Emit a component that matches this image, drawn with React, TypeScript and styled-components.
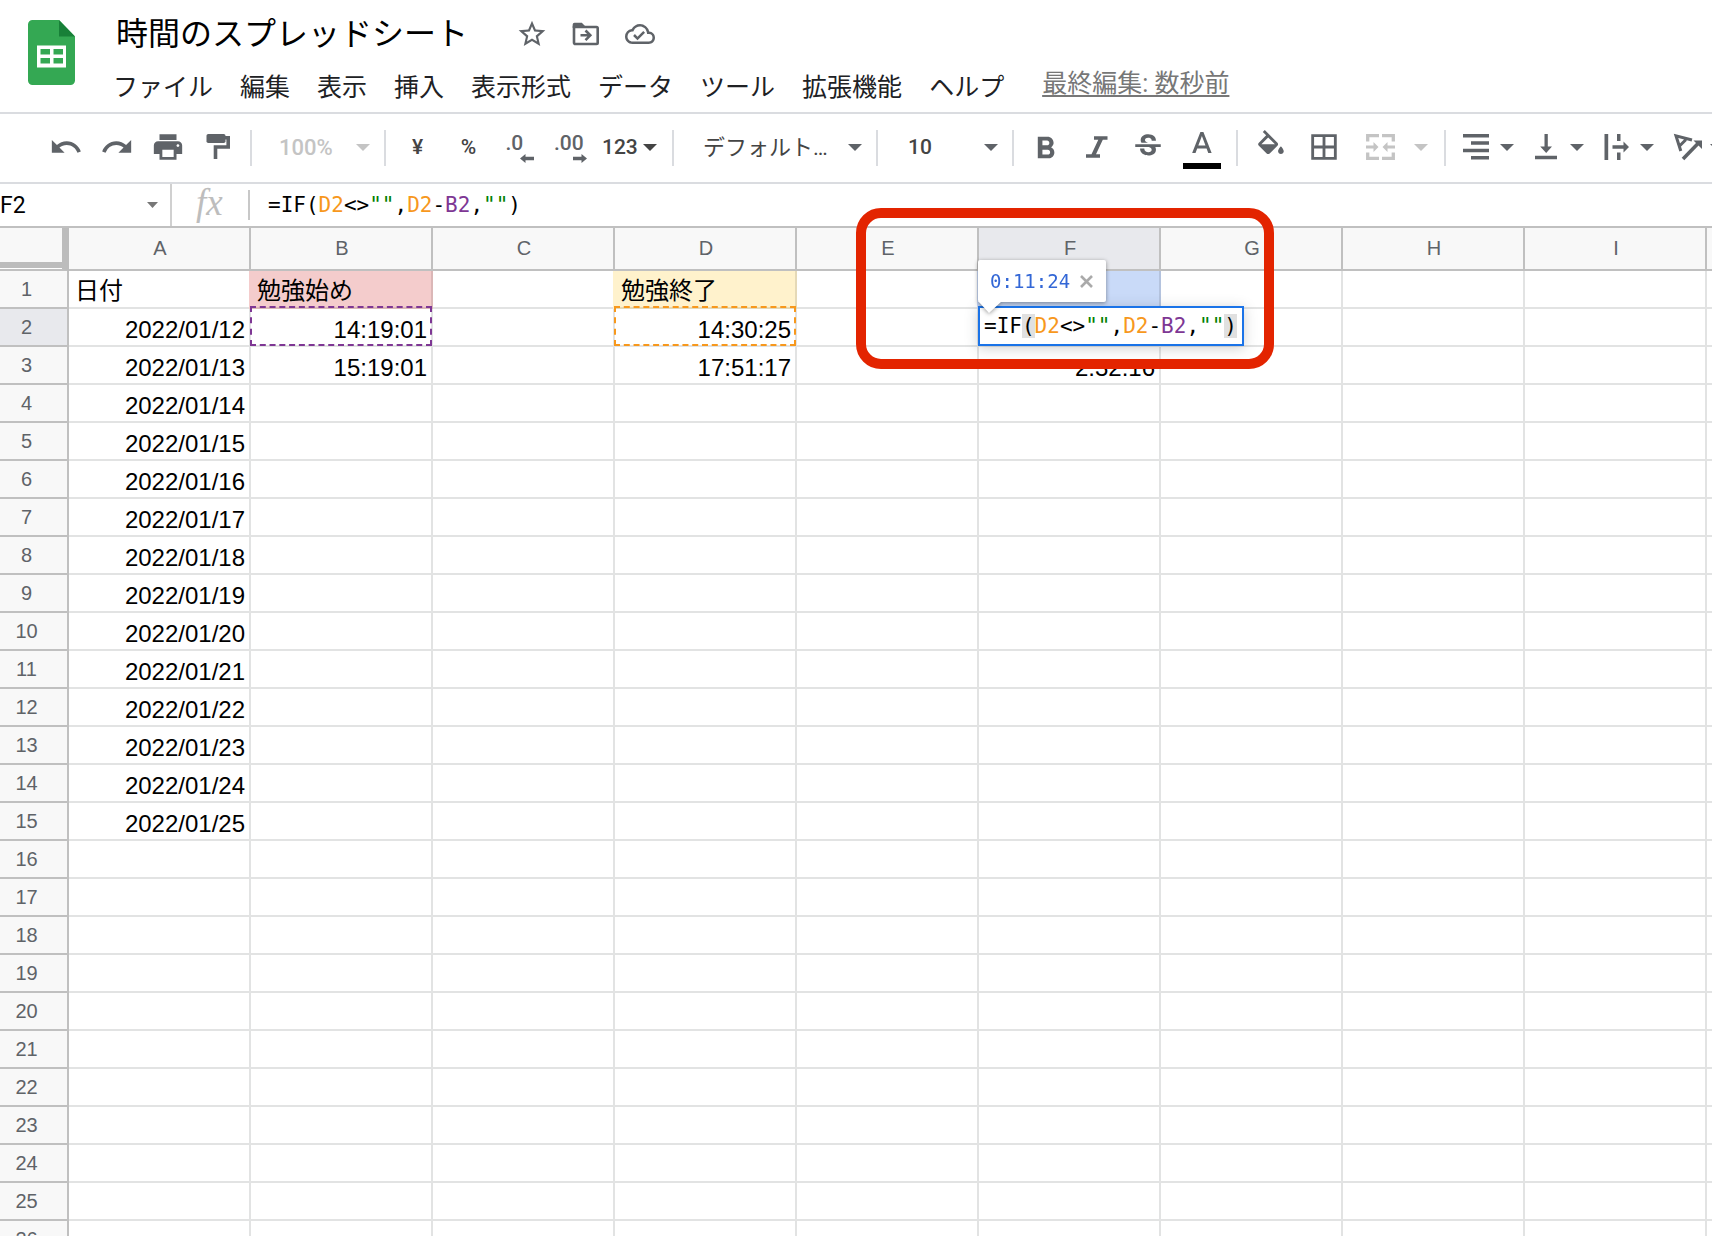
import React from "react";
import styled, { createGlobalStyle, css } from "styled-components";
import {
  MdBorderAll,
  MdOutlineCloudDone,
  MdPrint,
  MdRedo,
  MdStarBorder,
  MdStrikethroughS,
  MdUndo,
} from "react-icons/md";

const ui = `Roboto, "Noto Sans CJK JP", sans-serif`;
const sheet = `"Liberation Sans", "Noto Sans CJK JP", sans-serif`;
const code = `"DejaVu Sans Mono", "Noto Sans CJK JP", monospace`;

const line = "#dadce0";
const rule = "#c0c0c0";
const grey = "#5f6368";

const GlobalStyle = createGlobalStyle`
  *, *::before, *::after { box-sizing: border-box; }
  body { margin: 0; background: #fff; font-family: ${ui}; }
  button, input, select { font: inherit; color: inherit; border: 0; background: none; padding: 0; margin: 0; }
  button, select { cursor: pointer; }
`;

const Page = styled.div`
  display: flex;
  flex-direction: column;
  height: 100vh;
  overflow: hidden;
`;

/* ---------- header ---------- */

const Header = styled.header`
  display: flex;
  align-items: flex-start;
  padding: 12px 28px 4px;
  border-bottom: 2px solid ${line};
`;

const Logo = styled.a`
  display: flex;
  padding-top: 8px;
  margin-right: 38px;
`;

const HeaderMain = styled.div`
  flex: 1;
  min-width: 0;
`;

const TitleRow = styled.div`
  display: flex;
  align-items: center;
  height: 44px;
`;

const Title = styled.h1`
  margin: 0 48px 0 3px;
  font-size: 32px;
  line-height: 44px;
  font-weight: 400;
  color: #000;
  white-space: nowrap;
`;

const TitleActions = styled.div`
  display: flex;
  align-items: center;
  gap: 22px;
`;

const TitleButton = styled.button`
  display: flex;
  align-items: center;
  justify-content: center;
  width: 32px;
  height: 32px;
  color: ${grey};
`;

const MenuRow = styled.nav`
  display: flex;
  align-items: flex-start;
  height: 52px;
  padding-top: 10px;
  gap: 27px;
  font-size: 25px;
  line-height: 44px;
  white-space: nowrap;
  color: #202124;
`;

const MenuButton = styled.button`
  line-height: 44px;
`;

const LastEdit = styled.a`
  margin-left: 11px;
  line-height: 36px;
  color: #777;
  text-decoration: underline;
  text-decoration-thickness: 2px;
  text-underline-offset: 3px;
`;

/* ---------- toolbar ---------- */

const Toolbar = styled.div`
  display: flex;
  align-items: center;
  height: 70px;
  padding-left: 40px;
  border-bottom: 2px solid ${line};
  font-size: 21px;
  font-weight: 500;
  color: #444;
  white-space: nowrap;
`;

const Separator = styled.span`
  flex: none;
  width: 2px;
  height: 36px;
  margin: 0 6px;
  background: ${line};
`;

const Tool = styled.button<{ $w?: number; $icon?: boolean }>`
  flex: none;
  display: flex;
  align-items: center;
  justify-content: center;
  width: ${(p) => p.$w ?? 51}px;
  height: 52px;
  padding-bottom: 2px;
  color: ${(p) => (p.$icon ? grey : "#444")};
`;

const DropTool = styled(Tool)<{ $gap?: number; $pad?: number }>`
  justify-content: flex-start;
  gap: ${(p) => p.$gap ?? 11}px;
  padding-left: ${(p) => p.$pad ?? 11}px;

  &:disabled { color: #c4c4c4; }
`;

const Decimals = styled.span<{ $w: number }>`
  display: flex;
  flex-direction: column;
  align-items: flex-start;
  width: ${(p) => p.$w}px;
  line-height: 22px;

  svg { align-self: flex-end; }
`;

const SelectBox = styled.label<{ $w: number; $pad: number; $size?: number; $weight?: number; $faded?: boolean }>`
  flex: none;
  display: flex;
  align-items: center;
  width: ${(p) => p.$w}px;
  height: 52px;
  padding: 0 8px 2px ${(p) => p.$pad}px;
  color: ${(p) => (p.$faded ? "#c4c4c4" : "#444")};

  select {
    flex: 1;
    min-width: 0;
    appearance: none;
    outline: 0;
    font-size: ${(p) => p.$size ?? 21}px;
    font-weight: ${(p) => p.$weight ?? 500};
  }
  svg { flex: none; color: ${(p) => (p.$faded ? "#c4c4c4" : grey)}; }
`;

/* ---------- formula bar ---------- */

const FormulaRow = styled.div`
  display: flex;
  align-items: center;
  height: 44px;
  border-bottom: 2px solid ${rule};
`;

const NameBox = styled.label`
  display: flex;
  align-items: center;
  width: 172px;
  height: 42px;
  padding-right: 12px;
  border-right: 2px solid #d0d0d0;
  color: #777;

  input {
    flex: 1;
    min-width: 0;
    outline: 0;
    font-size: 23px;
    color: #000;
  }
`;

const Fx = styled.span`
  width: 78px;
  height: 30px;
  padding-left: 24px;
  border-right: 2px solid #c8c8c8;
  font: italic 37px/26px "Liberation Serif", serif;
  color: #bdbdbd;
`;

const FormulaInput = styled.div`
  flex: 1;
  padding-left: 18px;
  font: 21px/26px ${code};
  white-space: pre;
  outline: 0;
  color: #000;
`;

const Token = styled.span<{ $color?: string; $mark?: boolean }>`
  color: ${(p) => p.$color ?? "#000"};
  ${(p) => p.$mark && css`background: #e0e0e0;`}
`;

/* ---------- grid ---------- */

const GridArea = styled.main`
  position: relative;
  flex: 1;
  min-height: 0;
`;

const GridClip = styled.div`
  height: 100%;
  overflow: hidden;
`;

const Table = styled.table`
  table-layout: fixed;
  width: 1889px;
  border-collapse: separate;
  border-spacing: 0;
  font-family: ${sheet};
`;

const HeadCell = styled.th<{ $active?: boolean }>`
  border-right: 2px solid ${rule};
  border-bottom: 2px solid ${rule};
  background: ${(p) => (p.$active ? "#e8e9ed" : "#f8f8f8")};
  font-size: 20px;
  line-height: 24px;
  font-weight: 400;
  color: ${grey};
`;

const ColHead = styled(HeadCell)`
  height: 43px;
  padding: 0 0 2px 2px;
`;

const Corner = styled(ColHead)`
  border-right: 7px solid #bcbcbc;
  box-shadow: inset 0 -1px #fff, inset 0 -7px #bcbcbc;
`;

const RowHead = styled(HeadCell)`
  height: 38px;
  padding: 0 14px 0 0;
`;

const Cell = styled.td<{ $fill?: string; $right?: boolean }>`
  position: relative;
  height: 38px;
  padding: ${(p) => (p.$right ? "0 4px 1px 6px" : "0 4px 2px 6px")};
  border-right: 2px solid #e2e3e3;
  border-bottom: 2px solid #e2e3e3;
  vertical-align: bottom;
  text-align: ${(p) => (p.$right ? "right" : "left")};
  font-size: 24px;
  line-height: 28px;
  white-space: nowrap;
  color: #000;
  ${(p) =>
    p.$fill &&
    css`
      background: ${p.$fill};
      border-color: rgba(0, 0, 0, 0.1);
      box-shadow: -2px 0 ${p.$fill};
    `}
`;

const RangeMark = styled.span<{ $color: string }>`
  position: absolute;
  inset: -3px -1px -1px -1px;
  border: 2px dashed ${(p) => p.$color};
`;

const CellEditor = styled.div`
  position: absolute;
  z-index: 2;
  left: -1px;
  top: -3px;
  height: 40px;
  padding: 0 5px 0 4px;
  border: 2px solid #1a73e8;
  background: #fff;
  box-shadow: 0 2px 12px rgba(60, 64, 67, 0.25);
  font: 21px/36px ${code};
  white-space: pre;
  outline: 0;
`;

const Preview = styled.div`
  position: absolute;
  z-index: 3;
  left: -1px;
  top: -49px;
  display: flex;
  align-items: center;
  gap: 10px;
  height: 42px;
  padding: 0 13px 0 12px;
  border-radius: 2px;
  background: #fff;
  filter: drop-shadow(0 1px 2px rgba(0, 0, 0, 0.4));
  font: 19px/42px ${code};
  color: #3367d6;

  button { display: flex; color: #aaa; }
`;

const Tail = styled.svg`
  position: absolute;
  left: 0;
  top: 41px;
`;

const Highlight = styled.div`
  position: absolute;
  z-index: 5;
  left: 856px;
  top: -20px;
  width: 418px;
  height: 161px;
  border: 10px solid #e32400;
  border-radius: 25px;
  pointer-events: none;
`;

/* ---------- drawings ---------- */

const Caret = ({ w = 14, h = 7 }: { w?: number; h?: number }) => (
  <svg width={w} height={h} viewBox="0 0 14 7" preserveAspectRatio="none" aria-hidden="true">
    <path d="M0 0h14L7 7z" fill="currentColor" />
  </svg>
);

const SheetsLogo = () => (
  <svg width="47" height="65" viewBox="0 0 47 65" aria-hidden="true">
    <path d="M4.500 0H31l16 16.500v44A4.500 4.500 0 0 1 42.500 65h-38A4.500 4.500 0 0 1 0 60.500v-56A4.500 4.500 0 0 1 4.500 0z" fill="#34a853" />
    <path d="M31 0l16 16.500H31z" fill="#188038" />
    <path d="M9 25.500h29v22H9zM12.500 29v5.500h9.500V29zM25.500 29v5.500H35V29zM12.500 38v5.500h9.500V38zM25.500 38v5.500H35V38z" fill="#fff" fillRule="evenodd" />
  </svg>
);

const MoveIcon = () => (
  <svg width="28" height="24" viewBox="0 0 28 24" fill="none" aria-hidden="true">
    <path d="M2 5h22.500a1.200 1.200 0 0 1 1.200 1.200v14.600a1.200 1.200 0 0 1-1.200 1.200h-21A1.300 1.300 0 0 1 2 20.700z" stroke="currentColor" strokeWidth="2.600" />
    <path d="M.7 6V2.500A1.800 1.800 0 0 1 2.500.7h7.300L13 4v2z" fill="currentColor" />
    <path d="M8.500 13.300h9M13.500 8.500l4.800 4.800-4.800 4.800" stroke="currentColor" strokeWidth="2.600" />
  </svg>
);

const PaintIcon = () => (
  <svg width="36" height="36" viewBox="0 0 36 36" aria-hidden="true">
    <rect x="5.500" y="5" width="19" height="9" rx="1.800" fill="currentColor" />
    <path d="M24 8.800h3.200V18H14.500v12" fill="none" stroke="currentColor" strokeWidth="3.600" />
  </svg>
);

const ArrowLeft = () => (
  <svg width="14" height="9" viewBox="0 0 14 9" aria-hidden="true">
    <path d="M0 4.500L5.500 0v2.800H14v3.400H5.500V9z" fill="currentColor" />
  </svg>
);

const ArrowRight = () => (
  <svg width="14" height="9" viewBox="0 0 14 9" aria-hidden="true">
    <path d="M14 4.500L8.500 0v2.800H0v3.400h8.500V9z" fill="currentColor" />
  </svg>
);

const BoldIcon = () => (
  <svg width="37" height="37" viewBox="0 -1 24 24" aria-hidden="true">
    <path fill="currentColor" d="M15.600 10.790c.97-.67 1.650-1.770 1.650-2.790 0-2.260-1.750-4-4-4H7v14h7.040c2.090 0 3.710-1.700 3.710-3.790 0-1.520-.86-2.820-2.150-3.420zM10 6.500h3c.83 0 1.500.67 1.500 1.500s-.67 1.500-1.500 1.500h-3v-3zm3.500 9H10v-3h3.500c.83 0 1.500.67 1.500 1.500s-.67 1.500-1.500 1.500z" />
  </svg>
);

const ItalicIcon = () => (
  <svg width="36" height="36" viewBox="0 0 36 36" aria-hidden="true">
    <path fill="currentColor" d="M15 7.300h13.500v3.500h-4.700L17 25.300h4v3.500H7v-3.500h5.500l6.800-14.500H15z" />
  </svg>
);

const TextColorIcon = () => (
  <svg width="38" height="44" viewBox="0 -4 38 44" aria-hidden="true">
    <path transform="translate(.9 -1.500) scale(1.500)" fill="currentColor" d="M11 3L5.500 17h2.250l1.120-3h6.250l1.120 3h2.250L13 3h-2zm-1.380 9L12 5.670 14.380 12H9.620z" />
    <rect y="34" width="38" height="6" fill="#000" />
  </svg>
);

const FillIcon = () => (
  <svg width="34" height="34" viewBox="0 0 24 24" aria-hidden="true">
    <path fill="currentColor" d="M16.560 8.940L7.620 0 6.210 1.410l2.380 2.380-5.150 5.150a1.490 1.490 0 0 0 0 2.120l5.500 5.500c.29.29.68.44 1.060.44s.77-.15 1.060-.44l5.500-5.500c.59-.58.59-1.530 0-2.120zM5.210 10L10 5.210 14.790 10H5.210zM19 11.500s-2 2.170-2 3.500c0 1.100.9 2 2 2s2-.9 2-2c0-1.330-2-3.500-2-3.500z" />
  </svg>
);

const MergeIcon = () => (
  <svg width="29" height="26" viewBox="0 0 29 26" fill="none" aria-hidden="true">
    <path d="M13 1.700H1.700v5.800M16 1.700h11.300v5.800M13 24.300H1.700v-5.800M16 24.300h11.300v-5.800" stroke="currentColor" strokeWidth="3.300" />
    <path d="M0 11.500h7.500V8l5 5-5 5v-3.500H0zM29 11.500h-7.500V8l-5 5 5 5v-3.500H29z" fill="currentColor" />
  </svg>
);

const AlignRightIcon = () => (
  <svg width="26" height="26" viewBox="0 0 26 26" aria-hidden="true">
    <path d="M0 0h26v3.500H0zM8 7.300h18v3.500H8zM0 14.700h26v3.500H0zM8 22h18v3.500H8z" fill="currentColor" />
  </svg>
);

const AlignBottomIcon = () => (
  <svg width="26" height="26" viewBox="0 0 26 26" aria-hidden="true">
    <path d="M11.500 0h3.300v12.500H19L13.200 19l-6-6.500h4.300zM2 21.800h22v3.400H2z" fill="currentColor" />
  </svg>
);

const OverflowIcon = () => (
  <svg width="26" height="26" viewBox="0 0 26 26" aria-hidden="true">
    <path d="M1.500 0h3.700v26H1.500zM14 0h3.500v7H14zM14 18.500h3.500V26H14zM9.500 11.200h11V7.500L26 13l-5.500 5.500v-3.800h-11z" fill="currentColor" />
  </svg>
);

const RotateIcon = () => (
  <svg width="26" height="26" viewBox="0 0 26 26" overflow="visible" fill="none" aria-hidden="true">
    <path d="M7.800 17L3 1.800 19 6M6 12.500l6.800-6.800" stroke="currentColor" strokeWidth="3" />
    <path d="M10 25L25 9.500" stroke="currentColor" strokeWidth="3.600" />
    <path d="M20.500 6.500h8.500V15z" fill="currentColor" />
  </svg>
);

const CloseIcon = () => (
  <svg width="13" height="13" viewBox="0 0 13 13" aria-hidden="true">
    <path d="M1 1l11 11M12 1L1 12" stroke="currentColor" strokeWidth="2.600" />
  </svg>
);

/* ---------- data ---------- */

const MENUS = ["ファイル", "編集", "表示", "挿入", "表示形式", "データ", "ツール", "拡張機能", "ヘルプ"];
const COLUMNS = ["A", "B", "C", "D", "E", "F", "G", "H", "I", ""];
const ROWS = Array.from({ length: 26 }, (_, i) => i + 1);

const VALUES: Record<string, string> = {
  A1: "日付",
  B1: "勉強始め",
  D1: "勉強終了",
  B2: "14:19:01",
  D2: "14:30:25",
  B3: "15:19:01",
  D3: "17:51:17",
  F3: "2:32:16",
};
for (let day = 12; day <= 25; day++) VALUES[`A${day - 10}`] = `2022/01/${day}`;

const FILLS: Record<string, string> = { B1: "#f4cccc", D1: "#fff2cc", F1: "#c9daf8" };

const ORANGE = "#f7981d";
const PURPLE = "#7e3794";
const GREEN = "#008000";

const Formula = ({ mark }: { mark?: boolean }) => (
  <>
    <Token>=IF</Token>
    <Token $mark={mark}>(</Token>
    <Token $color={ORANGE}>D2</Token>
    <Token>{"<>"}</Token>
    <Token $color={GREEN}>{'""'}</Token>
    <Token>,</Token>
    <Token $color={ORANGE}>D2</Token>
    <Token>-</Token>
    <Token $color={PURPLE}>B2</Token>
    <Token>,</Token>
    <Token $color={GREEN}>{'""'}</Token>
    <Token $mark={mark}>)</Token>
  </>
);

const ActiveEditor = () => (
  <>
    <CellEditor role="textbox" aria-label="セル F2" contentEditable suppressContentEditableWarning spellCheck={false}>
      <Formula mark />
    </CellEditor>
    <Preview>
      <Tail width="24" height="13" viewBox="0 0 24 13" aria-hidden="true">
        <path d="M0 0h24L11 12z" fill="#fff" />
      </Tail>
      <span>0:11:24</span>
      <button type="button" aria-label="閉じる"><CloseIcon /></button>
    </Preview>
  </>
);

export default function App() {
  return (
    <Page>
      <GlobalStyle />
      <Header>
        <Logo href="#" aria-label="スプレッドシート ホーム"><SheetsLogo /></Logo>
        <HeaderMain>
          <TitleRow>
            <Title>時間のスプレッドシート</Title>
            <TitleActions>
              <TitleButton type="button" aria-label="スターを付ける"><MdStarBorder size={32} /></TitleButton>
              <TitleButton type="button" aria-label="移動"><MoveIcon /></TitleButton>
              <TitleButton type="button" aria-label="保存状況"><MdOutlineCloudDone size={30} /></TitleButton>
            </TitleActions>
          </TitleRow>
          <MenuRow>
            {MENUS.map((m) => (
              <MenuButton key={m} type="button">{m}</MenuButton>
            ))}
            <LastEdit href="#">最終編集: 数秒前</LastEdit>
          </MenuRow>
        </HeaderMain>
      </Header>

      <Toolbar role="toolbar">
        <Tool $icon type="button" aria-label="元に戻す"><MdUndo size={34} /></Tool>
        <Tool $icon type="button" aria-label="やり直し"><MdRedo size={34} /></Tool>
        <Tool $icon type="button" aria-label="印刷"><MdPrint size={34} /></Tool>
        <Tool $icon type="button" aria-label="書式を貼り付け"><PaintIcon /></Tool>
        <Separator />
        <SelectBox $w={120} $pad={21} $size={22} $faded>
          <select aria-label="ズーム" defaultValue="100%"><option>100%</option></select>
          <Caret />
        </SelectBox>
        <Separator />
        <Tool type="button">¥</Tool>
        <Tool type="button">%</Tool>
        <Tool $icon type="button" aria-label="小数点以下の桁数を減らす">
          <Decimals $w={28}><span>.0</span><ArrowLeft /></Decimals>
        </Tool>
        <Tool $icon type="button" aria-label="小数点以下の桁数を増やす">
          <Decimals $w={33}><span>.00</span><ArrowRight /></Decimals>
        </Tool>
        <DropTool $w={70} $gap={5} $pad={6} type="button">123<Caret /></DropTool>
        <Separator />
        <SelectBox $w={190} $pad={23} $size={22} $weight={400}>
          <select aria-label="フォント" defaultValue="デフォルト…"><option>デフォルト…</option></select>
          <Caret />
        </SelectBox>
        <Separator />
        <SelectBox $w={122} $pad={24}>
          <select aria-label="フォントサイズ" defaultValue="10"><option>10</option></select>
          <Caret />
        </SelectBox>
        <Separator />
        <Tool $icon type="button" aria-label="太字"><BoldIcon /></Tool>
        <Tool $icon type="button" aria-label="斜体"><ItalicIcon /></Tool>
        <Tool $icon type="button" aria-label="取り消し線"><MdStrikethroughS size={34} /></Tool>
        <Tool $icon $w={57} type="button" aria-label="テキストの色"><TextColorIcon /></Tool>
        <Separator />
        <Tool $icon $w={54} type="button" aria-label="塗りつぶしの色"><FillIcon /></Tool>
        <Tool $icon $w={52} type="button" aria-label="枠線"><MdBorderAll size={34} /></Tool>
        <DropTool $icon $w={88} $gap={19} $pad={16} type="button" disabled aria-label="セルを結合"><MergeIcon /><Caret /></DropTool>
        <Separator />
        <DropTool $icon $w={70} type="button" aria-label="水平方向の配置"><AlignRightIcon /><Caret /></DropTool>
        <DropTool $icon $w={70} type="button" aria-label="垂直方向の配置"><AlignBottomIcon /><Caret /></DropTool>
        <DropTool $icon $w={70} type="button" aria-label="テキストを折り返す"><OverflowIcon /><Caret /></DropTool>
        <DropTool $icon $w={70} type="button" aria-label="テキストの回転"><RotateIcon /><Caret /></DropTool>
      </Toolbar>

      <FormulaRow>
        <NameBox>
          <input aria-label="名前ボックス" defaultValue="F2" />
          <Caret w={11} h={6} />
        </NameBox>
        <Fx>fx</Fx>
        <FormulaInput role="textbox" aria-label="数式" contentEditable suppressContentEditableWarning spellCheck={false}>
          <Formula />
        </FormulaInput>
      </FormulaRow>

      <GridArea>
        <GridClip>
          <Table>
            <colgroup>
              <col style={{ width: 69 }} />
              {COLUMNS.map((c) => (
                <col key={c} />
              ))}
            </colgroup>
            <thead>
              <tr>
                <Corner aria-label="すべて選択" />
                {COLUMNS.map((c) => (
                  <ColHead key={c} scope="col" $active={c === "F"}>{c}</ColHead>
                ))}
              </tr>
            </thead>
            <tbody>
              {ROWS.map((r) => (
                <tr key={r}>
                  <RowHead scope="row" $active={r === 2}>{r}</RowHead>
                  {COLUMNS.map((c) => {
                    const id = `${c}${r}`;
                    return (
                      <Cell key={c} $fill={FILLS[id]} $right={r > 1}>
                        {VALUES[id]}
                        {id === "B2" && <RangeMark $color={PURPLE} />}
                        {id === "D2" && <RangeMark $color={ORANGE} />}
                        {id === "F2" && <ActiveEditor />}
                      </Cell>
                    );
                  })}
                </tr>
              ))}
            </tbody>
          </Table>
        </GridClip>
        <Highlight />
      </GridArea>
    </Page>
  );
}
